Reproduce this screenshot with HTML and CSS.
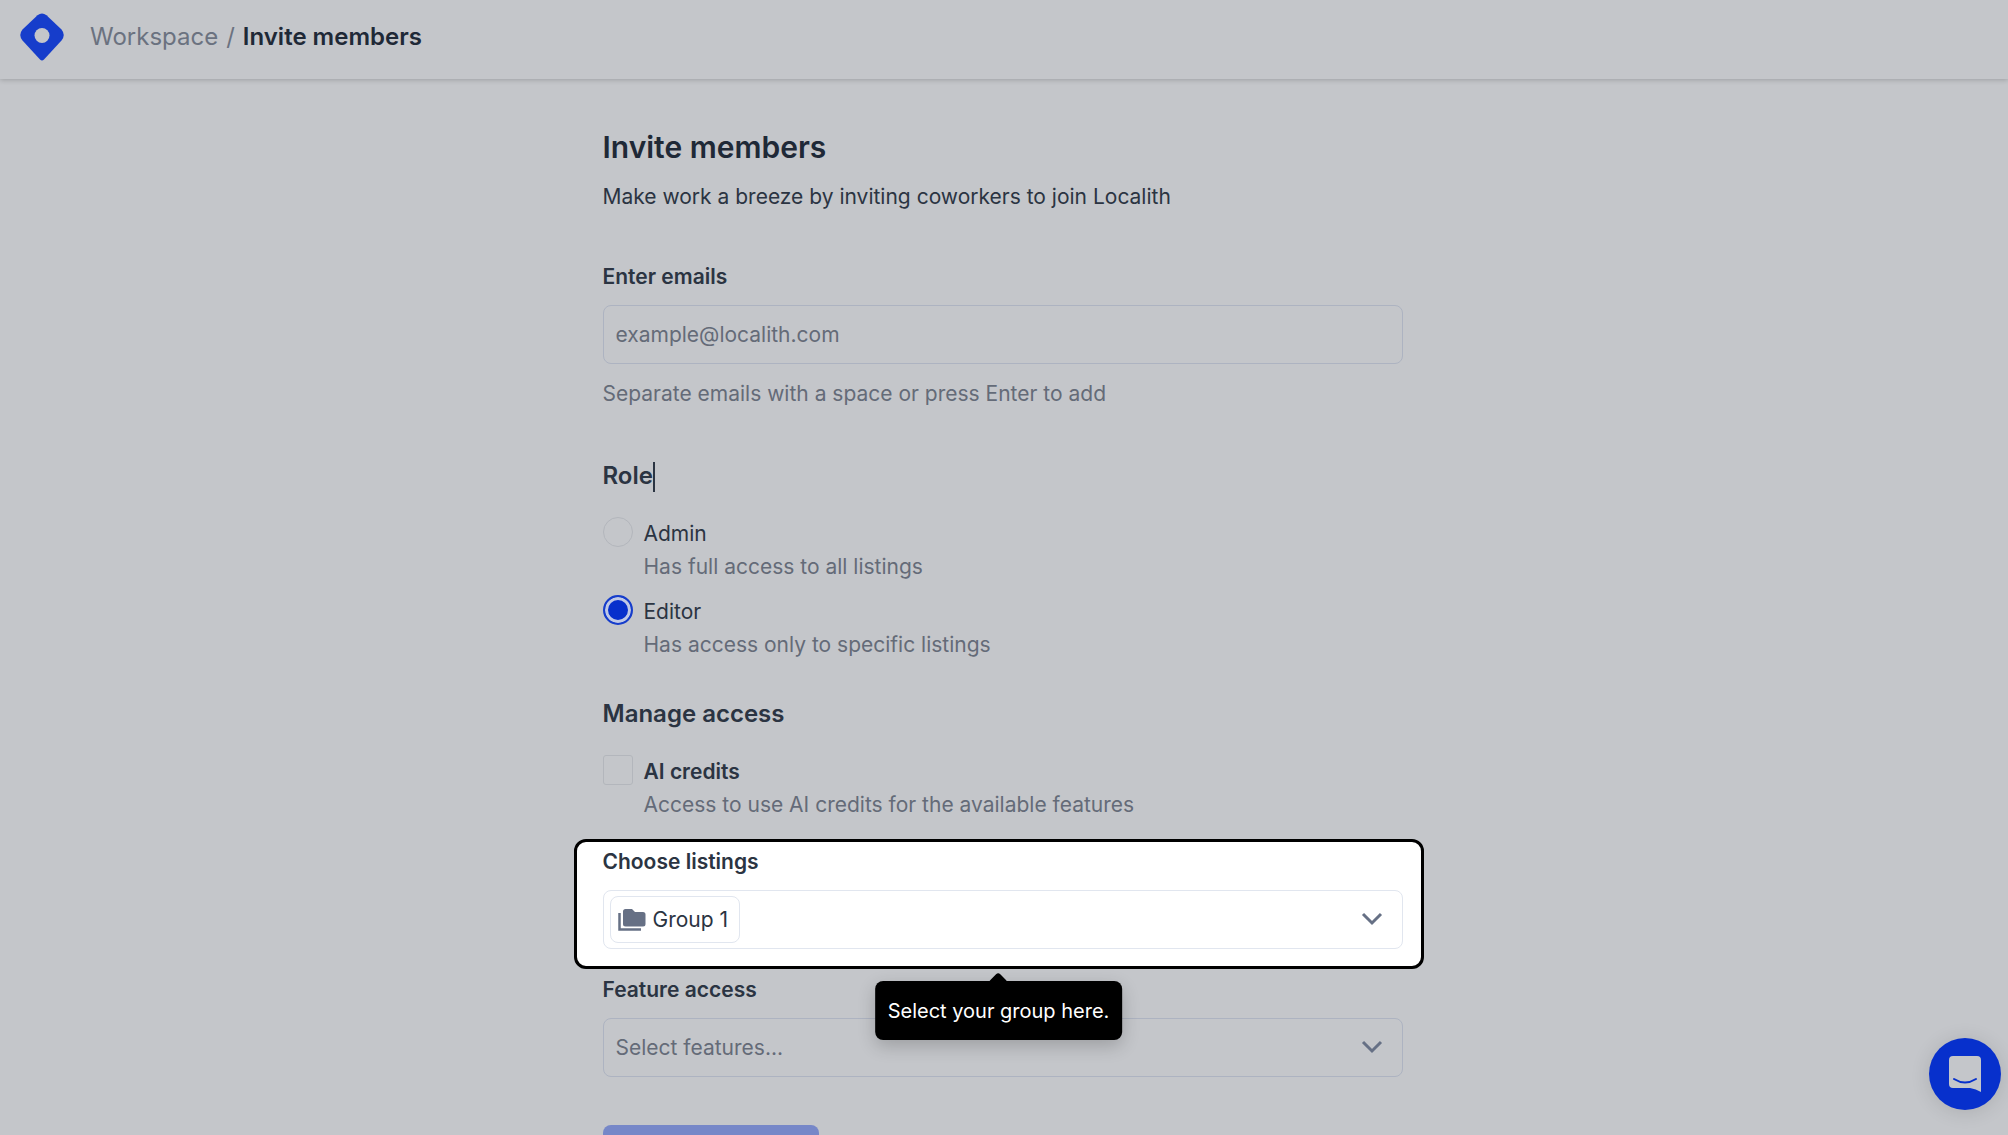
FILE: index.html
```html
<!DOCTYPE html>
<html lang="en">
<head>
    <meta charset="UTF-8">
    <meta name="viewport" content="width=device-width, initial-scale=1.0">
    <title>Invite members</title>
    <link rel="stylesheet" href="styles.css">
</head>
<body>
    <header class="topbar">
        <a href="#" class="logo" aria-label="Home">
            <svg viewBox="0 0 44 48" width="44" height="48">
                <path d="M17.5 2.3 Q22 -1.5 26.500 2.300 L41.500 16.500 Q46 22 41.500 27.500 L24 46.500 Q22 48.500 20 46.500 L2.500 27.500 Q-2 22 2.500 16.500 Z" fill="#163dcb"/>
                <circle cx="22" cy="22.500" r="7.500" fill="#c4c6ca"/>
            </svg>
        </a>
        <nav class="breadcrumb">
            <a href="#">Workspace</a>
            <span>/</span>
            <strong>Invite members</strong>
        </nav>
    </header>

    <main class="content">
        <form class="invite">
            <h1>Invite members</h1>
            <p class="lead">Make work a breeze by inviting coworkers to join Localith</p>

            <label class="field-label" for="emails">Enter emails</label>
            <input class="box" type="text" id="emails" placeholder="example@localith.com">
            <p class="hint">Separate emails with a space or press Enter to add</p>

            <h2>Role<span class="caret"></span></h2>
            <div class="option">
                <input type="radio" name="role" id="admin">
                <div>
                    <label for="admin">Admin</label>
                    <p>Has full access to all listings</p>
                </div>
            </div>
            <div class="option">
                <input type="radio" name="role" id="editor" checked>
                <div>
                    <label for="editor">Editor</label>
                    <p>Has access only to specific listings</p>
                </div>
            </div>

            <h2 class="access-title">Manage access</h2>
            <div class="option">
                <input type="checkbox" id="credits">
                <div>
                    <label class="bold" for="credits">AI credits</label>
                    <p>Access to use AI credits for the available features</p>
                </div>
            </div>

            <div class="spotlight">
                <label class="field-label" for="listings">Choose listings</label>
                <div class="select">
                    <select class="box" id="listings"><option></option></select>
                    <span class="chip">
                        <svg viewBox="0 0 28 24" width="28" height="24">
                            <path d="M1.500 5 V21.500 H23" fill="none" stroke="#667085" stroke-width="2.500"/>
                            <path d="M7.500 1 H14 L17 4 H25 Q27.500 4 27.500 6.500 V16 Q27.500 18.500 25 18.500 H7.500 Q5 18.500 5 16 V3.500 Q5 1 7.500 1 Z" fill="#667085"/>
                        </svg>
                        Group 1
                    </span>
                    <svg class="chevron" viewBox="0 0 22 14" width="22" height="14"><path d="M2 2 L11 11 L20 2"/></svg>
                </div>
                <div class="tooltip" role="tooltip">Select your group here.</div>
            </div>

            <label class="field-label" for="features">Feature access</label>
            <div class="select">
                <select class="box" id="features"><option>Select features...</option></select>
                <svg class="chevron" viewBox="0 0 22 14" width="22" height="14"><path d="M2 2 L11 11 L20 2"/></svg>
            </div>

            <button type="submit" class="submit" aria-label="Send" disabled></button>
        </form>
    </main>

    <button class="chat" aria-label="Open chat">
        <svg viewBox="0 0 32 36" width="32" height="36">
            <path d="M4 0 H28 Q32 0 32 4 V36 Q27 33 21 32 H4 Q0 32 0 28 V4 Q0 0 4 0 Z" fill="#c4c6ca"/>
            <path d="M5 23 Q16 30 27 23" fill="none" stroke="#0730cc" stroke-width="2" stroke-linecap="round"/>
        </svg>
    </button>
</body>
</html>
```
FILE: styles.css
```css
* {
    box-sizing: border-box;
}
body {
    margin: 0;
    height: 100vh;
    display: flex;
    flex-direction: column;
    overflow: hidden;
    font-family: Inter, sans-serif;
    font-size: 21px;
    line-height: 32px;
    color: #2b3442;
    background: #c4c6ca;
}
h1, h2, p {
    margin: 0;
}
input, select, button {
    font: inherit;
    color: inherit;
}

/* Top bar */
.topbar {
    flex: none;
    display: flex;
    align-items: center;
    gap: 26px;
    height: 79px;
    padding: 0 20px 5px;
    box-shadow: 0 1px 5px rgba(0, 0, 0, 0.2);
}
.logo {
    display: flex;
}
.breadcrumb {
    display: flex;
    gap: 8px;
    font-size: 24px;
    color: #6b7280;
}
.breadcrumb a {
    color: inherit;
    text-decoration: none;
}
.breadcrumb strong {
    font-weight: 600;
    color: #1f2937;
}

/* Form */
.content {
    flex: 1;
    min-height: 0;
    overflow-y: auto;
    scrollbar-width: none;
    padding: 48px 27px 48px 24px;
}
.invite {
    max-width: 800px;
    margin: 0 auto;
}
h1 {
    font-size: 30px;
    line-height: 40px;
    font-weight: 600;
    color: #1f2937;
}
.lead {
    margin: 14px 0 48px;
}
.field-label {
    display: block;
    margin-bottom: 12px;
    font-weight: 600;
}
.box {
    display: block;
    width: 100%;
    height: 59px;
    padding: 0 12px;
    border: 1px solid #adb3c1;
    border-radius: 8px;
    background: transparent;
    appearance: none;
    color: #646b78;
}
.box::placeholder {
    color: #646b78;
    opacity: 1;
}
.hint {
    margin-top: 14px;
    color: #646b78;
}
h2 {
    margin: 49px 0 24px;
    font-size: 24px;
    line-height: 34px;
    font-weight: 600;
}
.access-title {
    margin-top: 24px;
}
.caret {
    display: inline-block;
    height: 30px;
    border-left: 2px solid #2b3442;
    vertical-align: middle;
}
.option {
    display: flex;
    gap: 11px;
    padding-bottom: 12px;
    line-height: 33px;
}
.option input {
    flex: none;
    width: 30px;
    height: 30px;
    margin: 0;
    border: 1px solid #b3b6bc;
    border-radius: 3px;
    appearance: none;
}
.option input[type="radio"] {
    border-radius: 50%;
}
.option input[type="radio"]:checked {
    border: 2px solid #163dcb;
    background: #0730cc;
    box-shadow: inset 0 0 0 3px #c0c9e6;
}
.option p {
    color: #646b78;
}
.bold {
    font-weight: 600;
}

/* Highlighted field and its tip */
.spotlight {
    position: relative;
    margin: 6px -21px 5px -29px;
    padding: 4px 18px 17px 26px;
    border: 3px solid #000;
    border-radius: 12px;
    background: #fff;
}
.spotlight .box {
    border-color: #e1e6ef;
}
.select {
    position: relative;
}
.chip {
    position: absolute;
    top: 6px;
    left: 7px;
    display: flex;
    align-items: center;
    gap: 7px;
    height: 47px;
    padding: 0 11px 0 7px;
    border: 1px solid #e1e6ef;
    border-radius: 8px;
    pointer-events: none;
}
.chevron {
    position: absolute;
    top: 22px;
    right: 20px;
    fill: none;
    stroke: #667085;
    stroke-width: 3px;
    pointer-events: none;
}
.tooltip {
    position: absolute;
    top: 139px;
    left: 50%;
    transform: translateX(-50%);
    z-index: 1;
    padding: 14px 13px 13px;
    border-radius: 8px;
    background: #000;
    color: #fff;
    font-size: 20px;
    white-space: nowrap;
    box-shadow: 0 6px 18px rgba(0, 0, 0, 0.2);
}
.tooltip::before {
    content: "";
    position: absolute;
    top: -6px;
    left: 50%;
    width: 14px;
    height: 14px;
    margin-left: -7px;
    border-radius: 3px;
    background: #000;
    transform: rotate(45deg);
}
.submit {
    width: 216px;
    height: 56px;
    margin-top: 48px;
    border: none;
    border-radius: 8px;
    background: #7687c8;
}

/* Chat launcher */
.chat {
    position: fixed;
    right: 7px;
    bottom: 25px;
    display: flex;
    align-items: center;
    justify-content: center;
    width: 72px;
    height: 72px;
    padding: 0;
    border: none;
    border-radius: 50%;
    background: #0730cc;
    box-shadow: 0 2px 20px rgba(0, 0, 0, 0.12);
}
```
